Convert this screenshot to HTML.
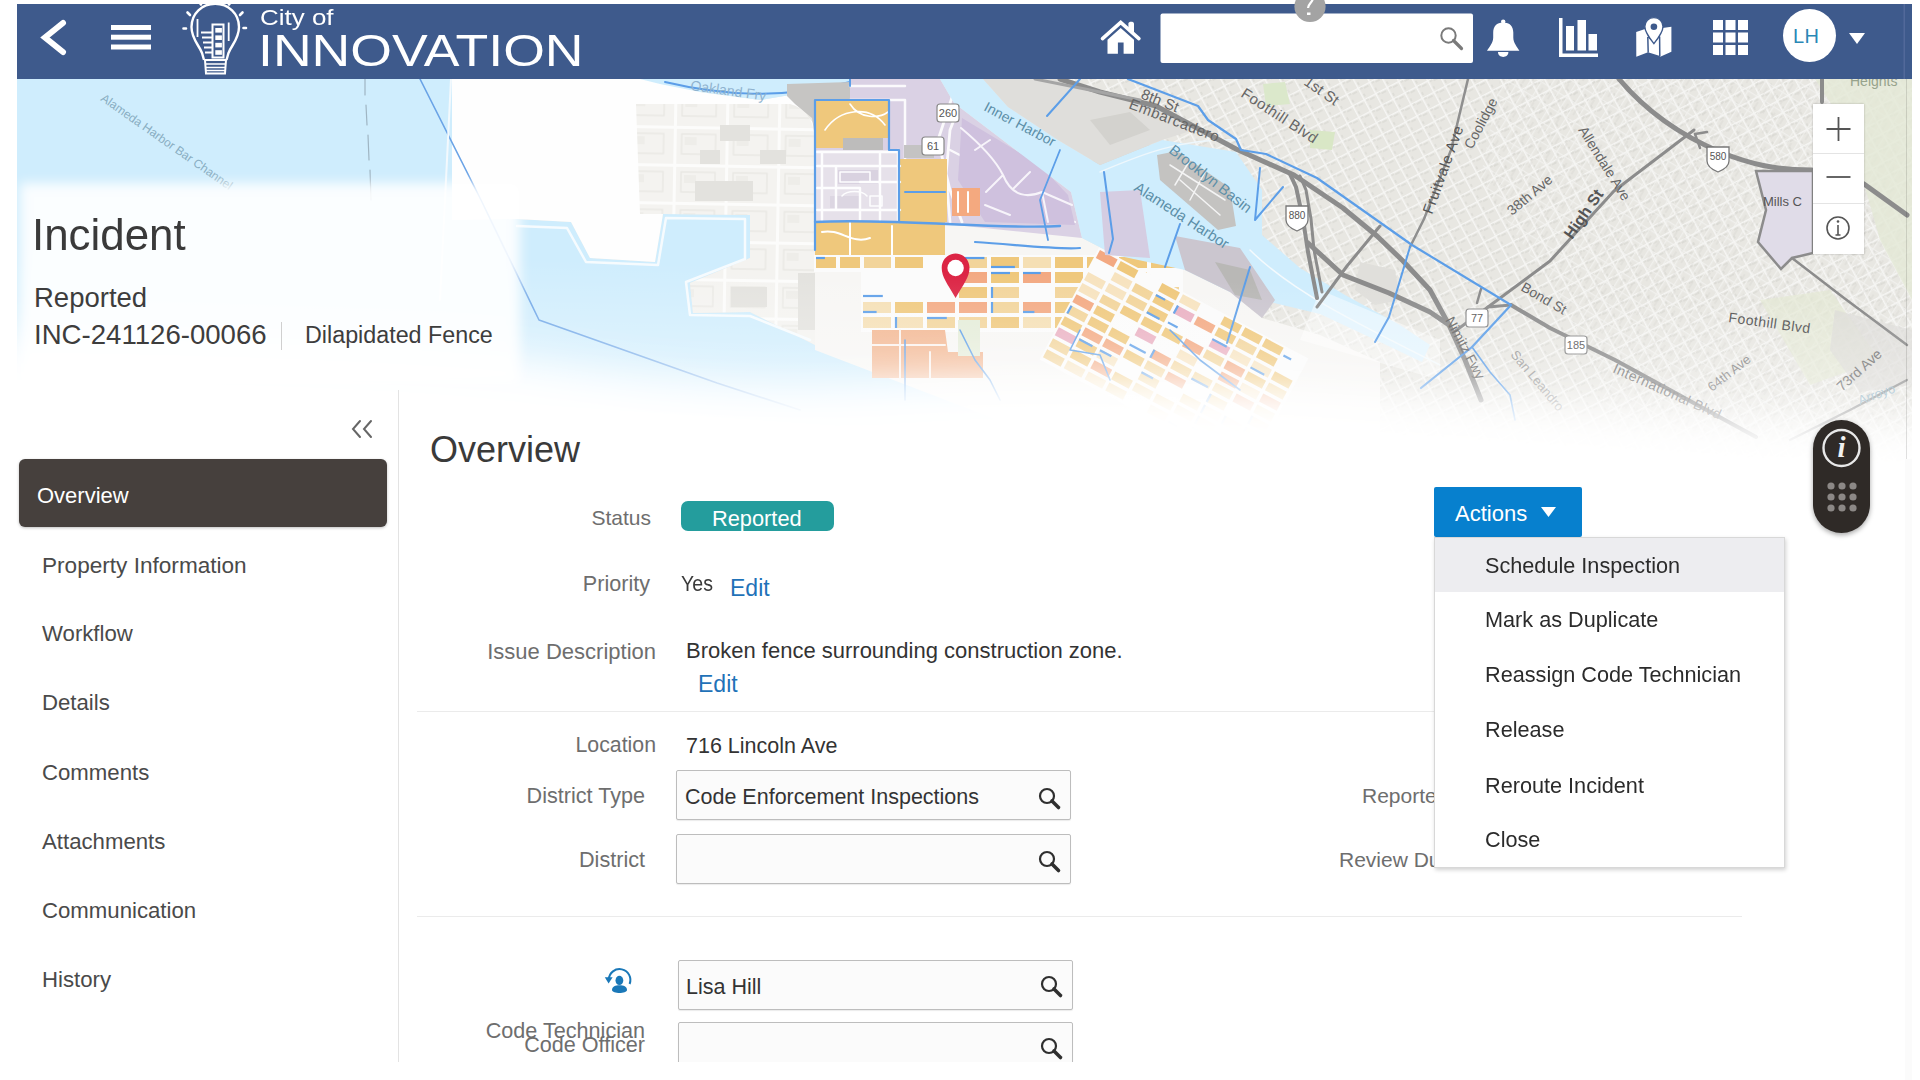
<!DOCTYPE html>
<html><head><meta charset="utf-8">
<style>
*{box-sizing:border-box;margin:0;padding:0}
html,body{width:1920px;height:1080px;overflow:hidden;background:#fff}
body{position:relative;font-family:"Liberation Sans",sans-serif;color:#333}
.abs{position:absolute}
#map{position:absolute;left:17px;top:79px;width:1895px;height:400px;overflow:hidden}
#fade{position:absolute;left:17px;top:300px;width:1890px;height:180px;background:linear-gradient(to bottom,rgba(255,255,255,0) 0%,rgba(255,255,255,.55) 40%,#fff 80%)}
#hdr{position:absolute;left:17px;top:4px;width:1895px;height:75px;background:#3e5a8c}
.t{position:absolute;white-space:nowrap;line-height:1}
.lbl{color:#6e6e6e;font-size:21px}
.val{color:#333;font-size:21.5px}
.edit{color:#1f72b8;font-size:22px}
.nav{position:absolute;left:42px;font-size:22px;color:#4a4a4a;white-space:nowrap;line-height:1}
.inp{position:absolute;border:1px solid #bdbdbd;border-radius:2px;background:#fbfbfb;box-shadow:0 1px 1px rgba(0,0,0,.08)}
.mi{position:absolute;left:1485px;font-size:22.8px;color:#2b2b2b;white-space:nowrap;line-height:1;transform:scaleX(0.95);transform-origin:0 0;margin-top:-1px}
</style></head>
<body>

<div id="map"><svg style="position:absolute;left:-17px;top:-79px" width="1920" height="480" viewBox="0 0 1920 480" font-family="Liberation Sans, sans-serif"><rect x="0.0" y="0.0" width="1920.0" height="480.0" fill="#eae9e4" />
<defs>
<pattern id="st1" width="13" height="13" patternUnits="userSpaceOnUse" patternTransform="rotate(-28)">
 <rect width="13" height="13" fill="#e8e7e2"/>
 <path d="M0,0.5 H13 M0.5,0 V13" stroke="#f6f6f4" stroke-width="2"/>
 <path d="M6,3 H11 M3,8 V11 M2,2 H5" stroke="#d2d1cc" stroke-width="0.9"/>
</pattern>
<pattern id="st2" width="10" height="17" patternUnits="userSpaceOnUse" patternTransform="rotate(32)">
 <path d="M0,0.5 H10 M0.5,0 V17" stroke="#f4f4f2" stroke-width="1.6"/>
 <path d="M5,5 V12" stroke="#d3d2cd" stroke-width="0.8"/>
</pattern>
<pattern id="ap" width="52" height="38" patternUnits="userSpaceOnUse" patternTransform="rotate(1)">
 <rect width="52" height="38" fill="#f4f3f0"/>
 <path d="M0,1.5 H52 M1.5,0 V38" stroke="#fcfcfb" stroke-width="3"/>
 <rect x="8" y="8" width="34" height="20" fill="none" stroke="#e7e6e2" stroke-width="1.2"/>
 <rect x="11" y="11" width="12" height="8" fill="#eeede9"/>
</pattern>
<pattern id="lav" width="14" height="12" patternUnits="userSpaceOnUse">
 <rect width="14" height="12" fill="#dcd6e4"/>
 <path d="M0,1 H14 M1,0 V12" stroke="#f7f6f9" stroke-width="2"/>
</pattern>
</defs>
<polygon points="1030.0,79.0 1920.0,79.0 1920.0,480.0 1300.0,480.0 1260.0,330.0 1200.0,270.0" fill="url(#st1)" />
<polygon points="1500.0,79.0 1920.0,79.0 1920.0,480.0 1640.0,480.0 1560.0,300.0 1480.0,180.0" fill="url(#st2)" opacity="0.7"/>
<polygon points="1815.0,79.0 1912.0,79.0 1912.0,300.0 1880.0,240.0 1860.0,170.0 1835.0,110.0" fill="#e3e9d6" opacity="0.8"/>
<polygon points="1760.0,300.0 1830.0,290.0 1880.0,360.0 1810.0,385.0" fill="#e4e8d4" opacity="0.7"/>
<polygon points="1263.0,84.0 1285.0,82.0 1290.0,104.0 1266.0,106.0" fill="#dbe8cb" />
<polygon points="1310.0,130.0 1335.0,132.0 1332.0,150.0 1310.0,148.0" fill="#d9e7c6" />
<polygon points="1090.0,150.0 1140.0,140.0 1180.0,160.0 1150.0,200.0 1100.0,190.0" fill="#d5d4d0" />
<polygon points="1360.0,262.0 1395.0,270.0 1400.0,300.0 1375.0,305.0 1355.0,290.0" fill="#e0dfdb" />
<polygon points="1835.0,310.0 1912.0,330.0 1912.0,385.0 1860.0,392.0 1830.0,350.0" fill="#dddcd8" opacity="0.7"/>
<polygon points="0.0,79.0 452.0,79.0 452.0,220.0 517.0,219.0 571.0,222.0 590.0,258.0 655.0,262.0 663.0,214.0 750.0,215.0 750.0,258.0 690.0,283.0 693.0,313.0 750.0,312.0 815.0,345.0 1300.0,380.0 1300.0,480.0 0.0,480.0" fill="#cfedfd" />
<polygon points="452.0,79.0 660.0,79.0 700.0,92.0 760.0,100.0 790.0,95.0 815.0,125.0 815.0,200.0 663.0,214.0 655.0,262.0 590.0,258.0 571.0,222.0 517.0,219.0 452.0,220.0" fill="#fefefe" />
<path d="M636,104 L790,104 C805,108 812,118 815,135 L815,345 L750,312 L693,313 L690,283 L750,258 L750,215 L663,214 L640,214 Z" fill="url(#ap)"/>
<rect x="695.0" y="181.0" width="58.0" height="20.0" fill="#e3e2de" />
<rect x="731.0" y="287.0" width="36.0" height="20.0" fill="#e3e2de" />
<rect x="798.0" y="273.0" width="18.0" height="57.0" fill="#e3e2de" />
<rect x="720.0" y="125.0" width="30.0" height="16.0" fill="#e3e2de" />
<rect x="760.0" y="150.0" width="26.0" height="14.0" fill="#e3e2de" />
<rect x="700.0" y="150.0" width="20.0" height="14.0" fill="#e3e2de" />
<polyline points="517.0,226.0 567.0,228.0 586.0,262.0 658.0,265.0 666.0,218.0 745.0,219.0 745.0,259.0 686.0,282.0 690.0,315.0 750.0,316.0 810.0,340.0" fill="none" stroke="#f6fbfe" stroke-width="2.5" stroke-linejoin="round" stroke-linecap="round" />
<polygon points="640.0,79.0 955.0,79.0 900.0,86.0 850.0,84.0 790.0,95.0 760.0,100.0 700.0,92.0 660.0,84.0" fill="#cfedfd" />
<path d="M665,82 C720,95 780,100 850,82 L900,79" fill="none" stroke="#5c9ee8" stroke-width="2" stroke-linejoin="round" stroke-linecap="round" />
<polygon points="787.0,84.0 850.0,82.0 850.0,133.0 815.0,138.0 812.0,118.0 795.0,104.0 787.0,96.0" fill="#c6c5c3" />
<polygon points="850.0,79.0 940.0,79.0 954.0,103.0 1071.0,192.0 1082.0,238.0 1060.0,245.0 960.0,228.0 880.0,228.0 815.0,250.0 815.0,140.0 850.0,133.0" fill="#dad1e4" />
<path d="M905,100 L905,160 M850,100 L905,100 M850,86 L905,86" fill="none" stroke="#fbfafc" stroke-width="2.5" stroke-linejoin="round" stroke-linecap="round" />
<path d="M958,79 L938,140 L950,190 L962,222 M970,79 L950,130 L946,175 L950,222" fill="none" stroke="#fbfafc" stroke-width="2.8" stroke-linejoin="round" stroke-linecap="round" />
<path d="M950,150 C990,170 1020,190 1040,215 M1000,185 L1025,170 M1040,215 L1075,222" fill="none" stroke="#fbfafc" stroke-width="2.2" stroke-linejoin="round" stroke-linecap="round" />
<rect x="904.0" y="145.0" width="30.0" height="13.0" fill="#c4c3c3" />
<polygon points="962.0,118.0 1040.0,165.0 1068.0,195.0 1075.0,225.0 985.0,222.0 958.0,180.0" fill="#cfc1de" />
<path d="M961,128 C985,148 998,165 1003,175 C1010,192 1022,200 1042,192 L1072,205 M1003,175 L986,192 M1014,188 L1030,172 M975,150 L990,140 M1042,192 L1048,222 M985,205 L1010,215" fill="none" stroke="#f7f4fa" stroke-width="2" stroke-linejoin="round" stroke-linecap="round" />
<rect x="843.0" y="136.0" width="40.0" height="16.0" fill="#bdbcbb" />
<polygon points="815.0,101.0 889.0,101.0 889.0,138.0 843.0,138.0 843.0,148.0 815.0,148.0" fill="#efc87c" />
<polygon points="899.0,159.0 947.0,159.0 947.0,222.0 899.0,222.0" fill="#efc87c" />
<path d="M905,192 L945,192" fill="none" stroke="#5c9ee8" stroke-width="2" stroke-linejoin="round" stroke-linecap="round" />
<rect x="952.0" y="188.0" width="28.0" height="28.0" fill="#f4a97f" />
<path d="M958,192 V212 M968,192 V212" fill="none" stroke="#fff" stroke-width="2" stroke-linejoin="round" stroke-linecap="round" />
<polygon points="815.0,222.0 945.0,222.0 945.0,256.0 815.0,256.0" fill="#efc87c" />
<path d="M822,232 C840,228 852,245 870,238 M892,226 V256 M850,222 V256" fill="none" stroke="#fff" stroke-width="2" stroke-linejoin="round" stroke-linecap="round" />
<rect x="815.0" y="150.0" width="85.0" height="72.0" fill="#e6e1ea" />
<rect x="838.0" y="170.0" width="40.0" height="14.0" fill="#d9d2e0" />
<rect x="830.0" y="196.0" width="30.0" height="12.0" fill="#dcd6e2" />
<path d="M817,152 H898 M817,166 H900 M817,188 H860 M860,182 H900 M817,210 H900 M822,152 V220 M836,166 V210 M880,152 V220 M898,150 V222 M860,188 V220" fill="none" stroke="#fdfdfe" stroke-width="2.4" stroke-linejoin="round" stroke-linecap="round" />
<path d="M840,172 h30 v10 h-30 z M842,196 c5,-6 20,-6 25,0 M870,196 h12 v10 h-12 z" fill="none" stroke="#fdfdfe" stroke-width="1.6" stroke-linejoin="round" stroke-linecap="round" />
<path d="M825,130 C840,108 870,105 885,125 M850,104 C860,120 880,118 888,112" fill="none" stroke="#fff" stroke-width="1.6" stroke-linejoin="round" stroke-linecap="round" />
<polygon points="815.0,256.0 945.0,256.0 945.0,224.0 1082.0,238.0 1115.0,255.0 1185.0,270.0 1230.0,292.0 1262.0,318.0 1320.0,335.0 1380.0,362.0 1380.0,480.0 1050.0,440.0 815.0,350.0" fill="#f7f6f4" />
<g transform="rotate(0 863 257)"><rect x="861" y="255" width="322" height="77" fill="#fbfbfb"/><rect x="863.0" y="257.0" width="28" height="11" fill="#f2d49a"/><path d="M863.0,296.0 h19.8" stroke="#5c9ee8" stroke-width="2.2"/><rect x="863.0" y="302.0" width="28" height="11" fill="#f5dfb4"/><path d="M863.0,312.0 h13.6" stroke="#5c9ee8" stroke-width="2.2"/><rect x="863.0" y="317.0" width="28" height="11" fill="#f5dfb4"/><rect x="895.0" y="257.0" width="28" height="11" fill="#efc87c"/><rect x="895.0" y="302.0" width="28" height="11" fill="#efc87c"/><rect x="895.0" y="317.0" width="28" height="11" fill="#f5dfb4"/><path d="M896.0,317.0 v11.0" stroke="#5c9ee8" stroke-width="2.2"/><rect x="927.0" y="302.0" width="28" height="11" fill="#f3a982"/><rect x="927.0" y="317.0" width="28" height="11" fill="#f2d49a"/><path d="M927.0,318.0 h19.8" stroke="#5c9ee8" stroke-width="2.2"/><rect x="959.0" y="257.0" width="28" height="11" fill="#f2d49a"/><path d="M959.0,258.0 h25.4" stroke="#5c9ee8" stroke-width="2.2"/><rect x="959.0" y="272.0" width="28" height="11" fill="#f3a982"/><rect x="959.0" y="287.0" width="28" height="11" fill="#efc87c"/><rect x="959.0" y="302.0" width="28" height="11" fill="#f3a982"/><rect x="959.0" y="317.0" width="28" height="11" fill="#f2d49a"/><rect x="991.0" y="257.0" width="28" height="11" fill="#efc87c"/><path d="M991.0,267.0 h23.9" stroke="#5c9ee8" stroke-width="2.2"/><rect x="991.0" y="272.0" width="28" height="11" fill="#efc87c"/><path d="M991.0,273.0 h19.0" stroke="#5c9ee8" stroke-width="2.2"/><rect x="991.0" y="287.0" width="28" height="11" fill="#f2d49a"/><path d="M992.0,287.0 v11.0" stroke="#5c9ee8" stroke-width="2.2"/><rect x="991.0" y="302.0" width="28" height="11" fill="#f2d49a"/><path d="M992.0,302.0 v11.0" stroke="#5c9ee8" stroke-width="2.2"/><rect x="991.0" y="317.0" width="28" height="11" fill="#efc87c"/><rect x="1023.0" y="257.0" width="28" height="11" fill="#f5dfb4"/><rect x="1023.0" y="272.0" width="28" height="11" fill="#f3a982"/><path d="M1023.0,273.0 h17.8" stroke="#5c9ee8" stroke-width="2.2"/><rect x="1023.0" y="302.0" width="28" height="11" fill="#f3a982"/><path d="M1023.0,312.0 h11.4" stroke="#5c9ee8" stroke-width="2.2"/><rect x="1023.0" y="317.0" width="28" height="11" fill="#f5dfb4"/><rect x="1055.0" y="257.0" width="28" height="11" fill="#efc87c"/><rect x="1055.0" y="272.0" width="28" height="11" fill="#efc87c"/><rect x="1055.0" y="287.0" width="28" height="11" fill="#f2d49a"/><rect x="1055.0" y="302.0" width="28" height="11" fill="#efc87c"/><rect x="1055.0" y="317.0" width="28" height="11" fill="#efc87c"/><rect x="1087.0" y="257.0" width="28" height="11" fill="#efc87c"/><rect x="1087.0" y="272.0" width="28" height="11" fill="#f2d49a"/><rect x="1087.0" y="287.0" width="28" height="11" fill="#efc87c"/><path d="M1087.0,288.0 h11.9" stroke="#5c9ee8" stroke-width="2.2"/><path d="M1087.0,311.0 h23.0" stroke="#5c9ee8" stroke-width="2.2"/><rect x="1087.0" y="317.0" width="28" height="11" fill="#f5dfb4"/><rect x="1119.0" y="257.0" width="28" height="11" fill="#efc87c"/><rect x="1119.0" y="272.0" width="28" height="11" fill="#efc87c"/><rect x="1119.0" y="302.0" width="28" height="11" fill="#f3a982"/><path d="M1119.0,303.0 h12.4" stroke="#5c9ee8" stroke-width="2.2"/><rect x="1119.0" y="317.0" width="28" height="11" fill="#efc87c"/><path d="M1119.0,327.0 h17.4" stroke="#5c9ee8" stroke-width="2.2"/><rect x="1151.0" y="257.0" width="28" height="11" fill="#efc87c"/><rect x="1151.0" y="287.0" width="28" height="11" fill="#f2d49a"/><rect x="1151.0" y="302.0" width="28" height="11" fill="#efc87c"/><path d="M1151.0,312.0 h23.0" stroke="#5c9ee8" stroke-width="2.2"/><path d="M1151.0,326.0 h21.9" stroke="#5c9ee8" stroke-width="2.2"/></g>
<g transform="rotate(0 816 257)"><rect x="814" y="255" width="50" height="17" fill="#fbfbfb"/><rect x="816.0" y="257.0" width="20" height="11" fill="#efc87c"/><path d="M816.0,258.0 h8.9" stroke="#5c9ee8" stroke-width="2.2"/><rect x="840.0" y="257.0" width="20" height="11" fill="#efc87c"/></g>
<polygon points="872.0,330.0 945.0,330.0 948.0,352.0 983.0,352.0 983.0,378.0 872.0,378.0" fill="#f2b58f" />
<path d="M872,345 H945 M900,330 V378 M930,352 V378" fill="none" stroke="#fbf3ee" stroke-width="2" stroke-linejoin="round" stroke-linecap="round" />
<polygon points="958.0,320.0 980.0,320.0 980.0,356.0 958.0,356.0" fill="#e4ecd8" />
<g transform="rotate(28 1100 250)"><rect x="1098" y="248" width="237.0" height="127.0" fill="#fbfbfb"/><rect x="1100.0" y="250.0" width="20" height="9" fill="#f3a982"/><rect x="1100.0" y="275.0" width="20" height="9" fill="#f7e3bf"/><rect x="1100.0" y="287.5" width="20" height="9" fill="#f7e3bf"/><rect x="1100.0" y="300.0" width="20" height="9" fill="#f3a982"/><rect x="1100.0" y="312.5" width="20" height="9" fill="#f2d49a"/><path d="M1101.0,312.5 v9.0" stroke="#5c9ee8" stroke-width="2.2"/><rect x="1100.0" y="325.0" width="20" height="9" fill="#efc87c"/><rect x="1100.0" y="337.5" width="20" height="9" fill="#eab0c2"/><rect x="1100.0" y="350.0" width="20" height="9" fill="#f2d49a"/><rect x="1100.0" y="362.5" width="20" height="9" fill="#f2d49a"/><rect x="1123.5" y="250.0" width="20" height="9" fill="#efc87c"/><rect x="1123.5" y="262.5" width="20" height="9" fill="#f7e3bf"/><rect x="1123.5" y="275.0" width="20" height="9" fill="#f7e3bf"/><rect x="1123.5" y="287.5" width="20" height="9" fill="#f2d49a"/><rect x="1123.5" y="300.0" width="20" height="9" fill="#efc87c"/><rect x="1123.5" y="312.5" width="20" height="9" fill="#efc87c"/><rect x="1123.5" y="325.0" width="20" height="9" fill="#f3a982"/><rect x="1123.5" y="337.5" width="20" height="9" fill="#efc87c"/><path d="M1123.5,338.5 h15.0" stroke="#5c9ee8" stroke-width="2.2"/><rect x="1123.5" y="350.0" width="20" height="9" fill="#efc87c"/><rect x="1123.5" y="362.5" width="20" height="9" fill="#f7e3bf"/><rect x="1147.0" y="262.5" width="20" height="9" fill="#f2d49a"/><rect x="1147.0" y="275.0" width="20" height="9" fill="#f2d49a"/><rect x="1147.0" y="287.5" width="20" height="9" fill="#efc87c"/><rect x="1147.0" y="312.5" width="20" height="9" fill="#efc87c"/><rect x="1147.0" y="325.0" width="20" height="9" fill="#f3a982"/><rect x="1147.0" y="337.5" width="20" height="9" fill="#f7e3bf"/><path d="M1147.0,338.5 h12.9" stroke="#5c9ee8" stroke-width="2.2"/><rect x="1147.0" y="350.0" width="20" height="9" fill="#f3a982"/><rect x="1147.0" y="362.5" width="20" height="9" fill="#f7e3bf"/><rect x="1170.5" y="250.0" width="20" height="9" fill="#efc87c"/><rect x="1170.5" y="262.5" width="20" height="9" fill="#efc87c"/><path d="M1170.5,263.5 h10.4" stroke="#5c9ee8" stroke-width="2.2"/><rect x="1170.5" y="275.0" width="20" height="9" fill="#efc87c"/><path d="M1170.5,283.0 h14.4" stroke="#5c9ee8" stroke-width="2.2"/><rect x="1170.5" y="287.5" width="20" height="9" fill="#efc87c"/><rect x="1170.5" y="300.0" width="20" height="9" fill="#eab0c2"/><path d="M1170.5,319.5 h18.2" stroke="#5c9ee8" stroke-width="2.2"/><rect x="1170.5" y="325.0" width="20" height="9" fill="#efc87c"/><rect x="1170.5" y="350.0" width="20" height="9" fill="#efc87c"/><rect x="1170.5" y="362.5" width="20" height="9" fill="#f2d49a"/><rect x="1194.0" y="250.0" width="20" height="9" fill="#f7e3bf"/><rect x="1194.0" y="262.5" width="20" height="9" fill="#eab0c2"/><path d="M1195.0,262.5 v9.0" stroke="#5c9ee8" stroke-width="2.2"/><path d="M1194.0,282.0 h10.9" stroke="#5c9ee8" stroke-width="2.2"/><rect x="1194.0" y="287.5" width="20" height="9" fill="#efc87c"/><rect x="1194.0" y="312.5" width="20" height="9" fill="#f3a982"/><path d="M1195.0,312.5 v9.0" stroke="#5c9ee8" stroke-width="2.2"/><rect x="1194.0" y="325.0" width="20" height="9" fill="#f2d49a"/><rect x="1194.0" y="337.5" width="20" height="9" fill="#f2d49a"/><path d="M1194.0,338.5 h13.1" stroke="#5c9ee8" stroke-width="2.2"/><rect x="1194.0" y="350.0" width="20" height="9" fill="#f2d49a"/><rect x="1217.5" y="262.5" width="20" height="9" fill="#f3a982"/><rect x="1217.5" y="287.5" width="20" height="9" fill="#f3a982"/><rect x="1217.5" y="300.0" width="20" height="9" fill="#f7e3bf"/><rect x="1217.5" y="312.5" width="20" height="9" fill="#f2d49a"/><rect x="1217.5" y="325.0" width="20" height="9" fill="#f3a982"/><rect x="1217.5" y="350.0" width="20" height="9" fill="#efc87c"/><rect x="1217.5" y="362.5" width="20" height="9" fill="#f2d49a"/><rect x="1241.0" y="250.0" width="20" height="9" fill="#efc87c"/><rect x="1241.0" y="262.5" width="20" height="9" fill="#efc87c"/><rect x="1241.0" y="275.0" width="20" height="9" fill="#eab0c2"/><path d="M1241.0,276.0 h16.3" stroke="#5c9ee8" stroke-width="2.2"/><rect x="1241.0" y="287.5" width="20" height="9" fill="#f2d49a"/><rect x="1241.0" y="312.5" width="20" height="9" fill="#f2d49a"/><path d="M1241.0,320.5 h18.8" stroke="#5c9ee8" stroke-width="2.2"/><rect x="1241.0" y="337.5" width="20" height="9" fill="#efc87c"/><rect x="1241.0" y="350.0" width="20" height="9" fill="#efc87c"/><path d="M1241.0,369.5 h9.9" stroke="#5c9ee8" stroke-width="2.2"/><rect x="1264.5" y="250.0" width="20" height="9" fill="#efc87c"/><rect x="1264.5" y="262.5" width="20" height="9" fill="#f2d49a"/><rect x="1264.5" y="275.0" width="20" height="9" fill="#f7e3bf"/><rect x="1264.5" y="287.5" width="20" height="9" fill="#f3a982"/><rect x="1264.5" y="300.0" width="20" height="9" fill="#f3a982"/><rect x="1264.5" y="312.5" width="20" height="9" fill="#f2d49a"/><rect x="1264.5" y="325.0" width="20" height="9" fill="#efc87c"/><path d="M1265.5,325.0 v9.0" stroke="#5c9ee8" stroke-width="2.2"/><rect x="1264.5" y="337.5" width="20" height="9" fill="#f7e3bf"/><path d="M1265.5,337.5 v9.0" stroke="#5c9ee8" stroke-width="2.2"/><rect x="1264.5" y="350.0" width="20" height="9" fill="#efc87c"/><path d="M1265.5,350.0 v9.0" stroke="#5c9ee8" stroke-width="2.2"/><rect x="1264.5" y="362.5" width="20" height="9" fill="#f7e3bf"/><path d="M1264.5,363.5 h18.7" stroke="#5c9ee8" stroke-width="2.2"/><rect x="1288.0" y="250.0" width="20" height="9" fill="#efc87c"/><rect x="1288.0" y="262.5" width="20" height="9" fill="#efc87c"/><rect x="1288.0" y="275.0" width="20" height="9" fill="#f7e3bf"/><path d="M1288.0,283.0 h15.5" stroke="#5c9ee8" stroke-width="2.2"/><rect x="1288.0" y="287.5" width="20" height="9" fill="#efc87c"/><rect x="1288.0" y="300.0" width="20" height="9" fill="#f7e3bf"/><rect x="1288.0" y="312.5" width="20" height="9" fill="#f3a982"/><rect x="1288.0" y="337.5" width="20" height="9" fill="#f2d49a"/><path d="M1289.0,337.5 v9.0" stroke="#5c9ee8" stroke-width="2.2"/><rect x="1288.0" y="350.0" width="20" height="9" fill="#f7e3bf"/><rect x="1288.0" y="362.5" width="20" height="9" fill="#efc87c"/><path d="M1288.0,363.5 h19.9" stroke="#5c9ee8" stroke-width="2.2"/><path d="M1311.5,257.0 h8.7" stroke="#5c9ee8" stroke-width="2.2"/><rect x="1311.5" y="275.0" width="20" height="9" fill="#efc87c"/><rect x="1311.5" y="287.5" width="20" height="9" fill="#f2d49a"/><rect x="1311.5" y="300.0" width="20" height="9" fill="#f3a982"/><rect x="1311.5" y="312.5" width="20" height="9" fill="#f2d49a"/><rect x="1311.5" y="325.0" width="20" height="9" fill="#efc87c"/><path d="M1312.5,325.0 v9.0" stroke="#5c9ee8" stroke-width="2.2"/><rect x="1311.5" y="337.5" width="20" height="9" fill="#efc87c"/><path d="M1312.5,337.5 v9.0" stroke="#5c9ee8" stroke-width="2.2"/></g>
<path d="M815,222 C900,218 1000,230 1060,226" fill="none" stroke="#5c9ee8" stroke-width="2.4" stroke-linejoin="round" stroke-linecap="round" />
<path d="M975,242 C1020,245 1060,250 1080,248" fill="none" stroke="#5c9ee8" stroke-width="2.2" stroke-linejoin="round" stroke-linecap="round" />
<path d="M815,250 L815,100 L889,100 L889,150 L899,150 L899,222" fill="none" stroke="#5c9ee8" stroke-width="2.2" stroke-linejoin="round" stroke-linecap="round" />
<path d="M850,79 L850,86" fill="none" stroke="#5c9ee8" stroke-width="2" stroke-linejoin="round" stroke-linecap="round" />
<polyline points="905.0,340.0 905.0,400.0" fill="none" stroke="#5c9ee8" stroke-width="1.6" stroke-linejoin="round" stroke-linecap="round" />
<polyline points="960.0,330.0 975.0,360.0 990.0,380.0 1000.0,400.0" fill="none" stroke="#5c9ee8" stroke-width="1.6" stroke-linejoin="round" stroke-linecap="round" />
<polyline points="1080.0,330.0 1070.0,350.0 1100.0,355.0 1110.0,380.0" fill="none" stroke="#5c9ee8" stroke-width="1.6" stroke-linejoin="round" stroke-linecap="round" />
<polyline points="1170.0,330.0 1200.0,360.0 1240.0,390.0" fill="none" stroke="#5c9ee8" stroke-width="1.6" stroke-linejoin="round" stroke-linecap="round" />
<polygon points="940.0,79.0 983.0,79.0 1008.0,107.0 1058.0,140.0 1100.0,165.0 1162.0,140.0 1236.0,152.0 1262.0,190.0 1262.0,228.0 1262.0,235.0 1300.0,268.0 1345.0,295.0 1400.0,325.0 1430.0,345.0 1422.0,362.0 1380.0,342.0 1320.0,314.0 1262.0,300.0 1230.0,292.0 1185.0,270.0 1115.0,255.0 1082.0,238.0 1071.0,192.0 954.0,103.0" fill="#cfedfd" />
<polygon points="1320.0,290.0 1440.0,340.0 1440.0,380.0 1300.0,340.0" fill="#ffffff" opacity="0.45"/>
<polygon points="983.0,79.0 1060.0,79.0 1156.0,106.0 1200.0,128.0 1162.0,140.0 1100.0,165.0 1058.0,140.0 1008.0,107.0" fill="#dfdedb" />
<polygon points="1090.0,120.0 1130.0,112.0 1150.0,130.0 1110.0,145.0" fill="#d3d2ce" />
<polygon points="1157.0,155.0 1177.0,151.0 1230.0,188.0 1236.0,226.0 1218.0,230.0 1160.0,180.0" fill="#c4c3c1" />
<path d="M1170,165 L1225,200 M1180,180 L1220,215 M1190,160 L1175,185 M1205,172 L1190,200" fill="none" stroke="#f4f4f4" stroke-width="1.5" stroke-linejoin="round" stroke-linecap="round" />
<path d="M1100,172 C1140,155 1180,138 1240,140" fill="none" stroke="#eef7fc" stroke-width="1.5" stroke-linejoin="round" stroke-linecap="round" />
<path d="M1250,250 C1290,290 1350,320 1440,365" fill="none" stroke="#f4fafd" stroke-width="1.5" stroke-linejoin="round" stroke-linecap="round" />
<polygon points="1100.0,192.0 1140.0,190.0 1150.0,258.0 1105.0,255.0" fill="#d5cde2" />
<polygon points="1175.0,236.0 1240.0,248.0 1275.0,300.0 1262.0,318.0 1230.0,292.0 1185.0,270.0" fill="#cbc6cf" />
<polygon points="1215.0,262.0 1250.0,270.0 1262.0,300.0 1235.0,295.0" fill="#b9b8b6" />
<polyline points="1060.0,79.0 1100.0,92.0 1156.0,106.0 1236.0,149.0 1294.0,175.0 1343.0,208.0 1377.0,236.0 1403.0,261.0 1430.0,290.0 1449.0,325.0 1465.0,360.0 1481.0,400.0" fill="none" stroke="#8c8c8c" stroke-width="5" stroke-linejoin="round" stroke-linecap="round" />
<polyline points="1290.0,174.0 1296.0,187.0 1303.0,219.0 1308.0,252.0 1317.0,298.0" fill="none" stroke="#8c8c8c" stroke-width="4" stroke-linejoin="round" stroke-linecap="round" />
<polyline points="1300.0,176.0 1306.0,190.0 1311.0,219.0 1314.0,250.0 1322.0,292.0" fill="none" stroke="#8c8c8c" stroke-width="3" stroke-linejoin="round" stroke-linecap="round" />
<polyline points="1308.0,243.0 1343.0,275.0 1389.0,293.0 1430.0,312.0 1449.0,325.0" fill="none" stroke="#8c8c8c" stroke-width="5" stroke-linejoin="round" stroke-linecap="round" />
<polyline points="1317.0,307.0 1347.0,266.0 1380.0,226.0" fill="none" stroke="#8c8c8c" stroke-width="3" stroke-linejoin="round" stroke-linecap="round" />
<polyline points="1511.0,305.0 1550.0,328.0 1615.0,360.0 1756.0,437.0" fill="none" stroke="#8c8c8c" stroke-width="4" stroke-linejoin="round" stroke-linecap="round" />
<polyline points="1454.0,332.0 1488.0,307.0 1550.0,261.0 1614.0,191.0 1694.0,130.0" fill="none" stroke="#8c8c8c" stroke-width="3" stroke-linejoin="round" stroke-linecap="round" />
<polyline points="1481.0,289.0 1477.0,303.0" fill="none" stroke="#8c8c8c" stroke-width="2.5" stroke-linejoin="round" stroke-linecap="round" />
<polyline points="1488.0,307.0 1511.0,305.0" fill="none" stroke="#8c8c8c" stroke-width="3" stroke-linejoin="round" stroke-linecap="round" />
<path d="M1619,79 C1645,110 1680,135 1720,152 C1750,164 1775,170 1812,170" fill="none" stroke="#8c8c8c" stroke-width="5" stroke-linejoin="round" stroke-linecap="round" />
<path d="M1700,148 L1695,134 L1707,132" fill="none" stroke="#8c8c8c" stroke-width="2.5" stroke-linejoin="round" stroke-linecap="round" />
<polyline points="1864.0,184.0 1907.0,215.0" fill="none" stroke="#8c8c8c" stroke-width="5" stroke-linejoin="round" stroke-linecap="round" />
<polyline points="1822.0,79.0 1822.0,102.0" fill="none" stroke="#8c8c8c" stroke-width="4" stroke-linejoin="round" stroke-linecap="round" />
<polyline points="1468.0,79.0 1451.0,150.0 1424.0,219.0 1410.0,247.0" fill="none" stroke="#8f8f8f" stroke-width="2.5" stroke-linejoin="round" stroke-linecap="round" />
<polyline points="1035.0,79.0 1090.0,90.0 1140.0,100.0" fill="none" stroke="#a5a5a5" stroke-width="3" stroke-linejoin="round" stroke-linecap="round" />
<polygon points="1756.0,171.0 1813.0,171.0 1813.0,253.0 1792.0,258.0 1781.0,269.0 1758.0,242.0 1766.0,210.0" fill="#e0dce8" stroke="#8c8c8c" stroke-width="2.5"/>
<polyline points="1792.0,258.0 1844.0,298.0 1907.0,345.0" fill="none" stroke="#8c8c8c" stroke-width="2.5" stroke-linejoin="round" stroke-linecap="round" />
<polyline points="1907.0,380.0 1850.0,410.0 1790.0,440.0" fill="none" stroke="#9a9a9a" stroke-width="2.2" stroke-linejoin="round" stroke-linecap="round" />
<polyline points="1128.0,79.0 1198.0,106.0 1208.0,120.0 1236.0,139.0 1241.0,150.0 1266.0,154.0 1317.0,178.0 1412.0,245.0 1511.0,305.0 1472.0,347.0 1421.0,388.0" fill="none" stroke="#5c9ee8" stroke-width="2.2" stroke-linejoin="round" stroke-linecap="round" />
<polyline points="1410.0,247.0 1389.0,317.0 1375.0,342.0" fill="none" stroke="#5c9ee8" stroke-width="2" stroke-linejoin="round" stroke-linecap="round" />
<polyline points="1260.0,168.0 1255.0,220.0 1283.0,187.0" fill="none" stroke="#5c9ee8" stroke-width="2" stroke-linejoin="round" stroke-linecap="round" />
<polyline points="1080.0,79.0 1047.0,116.0" fill="none" stroke="#5c9ee8" stroke-width="2" stroke-linejoin="round" stroke-linecap="round" />
<polyline points="1104.0,172.0 1113.0,239.0 1109.0,253.0" fill="none" stroke="#5c9ee8" stroke-width="2" stroke-linejoin="round" stroke-linecap="round" />
<polyline points="1180.0,224.0 1165.0,267.0" fill="none" stroke="#5c9ee8" stroke-width="2" stroke-linejoin="round" stroke-linecap="round" />
<polyline points="1250.0,267.0 1227.0,343.0" fill="none" stroke="#5c9ee8" stroke-width="2" stroke-linejoin="round" stroke-linecap="round" />
<polyline points="1060.0,150.0 1040.0,200.0 1048.0,240.0" fill="none" stroke="#5c9ee8" stroke-width="1.8" stroke-linejoin="round" stroke-linecap="round" />
<polyline points="1472.0,347.0 1490.0,372.0 1510.0,395.0 1515.0,420.0" fill="none" stroke="#5c9ee8" stroke-width="1.6" stroke-linejoin="round" stroke-linecap="round" />
<polyline points="420.0,79.0 481.0,200.0 539.0,320.0 717.0,383.0 800.0,410.0" fill="none" stroke="#6aa3e6" stroke-width="1.6" stroke-linejoin="round" stroke-linecap="round" />
<polyline points="451.0,79.0 445.0,200.0 440.0,300.0" fill="none" stroke="#f3f9fd" stroke-width="2" stroke-linejoin="round" stroke-linecap="round" />
<path d="M365,79 L365,95 M366,105 L367,125 M368,135 L369,160 M370,170 L371,200" fill="none" stroke="#9fb5c3" stroke-width="1.2" stroke-linejoin="round" stroke-linecap="round" />
<path d="M955.6,298 C947.5,284 941.7,277 941.7,267.8 C941.7,259.5 948,253.6 955.6,253.6 C963.2,253.6 969.5,259.5 969.5,267.8 C969.5,277 963.7,284 955.6,298 Z" fill="#dc2444"/>
<circle cx="955.6" cy="268" r="8.2" fill="#fff"/>
<text x="1128" y="108" font-size="15" fill="#666" transform="rotate(21 1128 108)" letter-spacing="0.5">Embarcadero</text>
<text x="1240" y="96" font-size="15" fill="#666" transform="rotate(33 1240 96)" letter-spacing="0.5">Foothill Blvd</text>
<text x="1303" y="84" font-size="15" fill="#666" transform="rotate(35 1303 84)" >1st St</text>
<text x="1140" y="98" font-size="15" fill="#666" transform="rotate(22 1140 98)" >8th St</text>
<text x="1168" y="152" font-size="15" fill="#5c8fa8" transform="rotate(38 1168 152)" >Brooklyn Basin</text>
<text x="1133" y="190" font-size="15" fill="#5c8fa8" transform="rotate(33 1133 190)" >Alameda Harbor</text>
<text x="983" y="110" font-size="14" fill="#5c8fa8" transform="rotate(28 983 110)" >Inner Harbor</text>
<text x="1432" y="215" font-size="15" fill="#555" transform="rotate(-70 1432 215)" letter-spacing="0.5">Fruitvale Ave</text>
<text x="1472" y="150" font-size="14" fill="#666" transform="rotate(-62 1472 150)" >Coolidge</text>
<text x="1512" y="216" font-size="14" fill="#666" transform="rotate(-40 1512 216)" >38th Ave</text>
<text x="1578" y="130" font-size="14" fill="#666" transform="rotate(58 1578 130)" >Allendale Ave</text>
<text x="1572" y="240" font-size="16" fill="#555" transform="rotate(-55 1572 240)" font-weight="bold">High St</text>
<text x="1520" y="290" font-size="14" fill="#666" transform="rotate(30 1520 290)" >Bond St</text>
<text x="1728" y="322" font-size="14" fill="#555" transform="rotate(8 1728 322)" letter-spacing="0.5">Foothill Blvd</text>
<text x="1612" y="372" font-size="14" fill="#777" transform="rotate(24 1612 372)" letter-spacing="0.5">International Blvd</text>
<text x="1712" y="392" font-size="13" fill="#888" transform="rotate(-38 1712 392)" >64th Ave</text>
<text x="1842" y="392" font-size="14" fill="#777" transform="rotate(-42 1842 392)" >73rd Ave</text>
<text x="1445" y="320" font-size="14" fill="#666" transform="rotate(62 1445 320)" >Nimitz Fwy</text>
<text x="1510" y="355" font-size="13" fill="#999" transform="rotate(50 1510 355)" >San Leandro</text>
<text x="1763" y="206" font-size="13" fill="#555" transform="rotate(0 1763 206)" >Mills C</text>
<text x="100" y="100" font-size="12" fill="#89aec2" transform="rotate(35 100 100)" >Alameda Harbor Bar Channel</text>
<text x="690" y="90" font-size="14" fill="#8fb3cf" transform="rotate(8 690 90)" >Oakland Fry</text>
<text x="1860" y="405" font-size="13" fill="#9cbccc" transform="rotate(-20 1860 405)" >Arroyo</text>
<text x="1850" y="86" font-size="14" fill="#97a38c" transform="rotate(0 1850 86)" >Heights</text>
<g><path d="M1286,206 h22 v14 c0,6 -6,9 -11,11 c-5,-2 -11,-5 -11,-11 Z" fill="#fff" stroke="#777" stroke-width="1.3"/><text x="1297" y="219" font-size="10" text-anchor="middle" fill="#555">880</text></g>
<g><path d="M1707,147 h22 v14 c0,6 -6,9 -11,11 c-5,-2 -11,-5 -11,-11 Z" fill="#fff" stroke="#777" stroke-width="1.3"/><text x="1718" y="160" font-size="10" text-anchor="middle" fill="#555">580</text></g>
<g><rect x="1466" y="309" width="22" height="18" rx="3" fill="#fff" stroke="#888" stroke-width="1.2"/><text x="1477" y="322" font-size="11" text-anchor="middle" fill="#555">77</text></g>
<g><rect x="1565" y="336" width="22" height="18" rx="3" fill="#fff" stroke="#888" stroke-width="1.2"/><text x="1576" y="349" font-size="11" text-anchor="middle" fill="#555">185</text></g>
<g><rect x="937" y="104" width="22" height="18" rx="3" fill="#fff" stroke="#888" stroke-width="1.2"/><text x="948" y="117" font-size="11" text-anchor="middle" fill="#555">260</text></g>
<g><rect x="922" y="137" width="22" height="18" rx="3" fill="#fff" stroke="#888" stroke-width="1.2"/><text x="933" y="150" font-size="11" text-anchor="middle" fill="#555">61</text></g>
<defs><linearGradient id="fg" gradientUnits="userSpaceOnUse" x1="0" y1="240" x2="-7" y2="450">
<stop offset="0" stop-color="#fff" stop-opacity="0"/>
<stop offset="0.45" stop-color="#fff" stop-opacity="0.3"/>
<stop offset="0.8" stop-color="#fff" stop-opacity="0.75"/>
<stop offset="1" stop-color="#fff" stop-opacity="1"/>
</linearGradient></defs>
<rect x="0" y="200" width="1920" height="300" fill="url(#fg)"/>
<defs><filter id="fb" x="-20%" y="-50%" width="140%" height="200%"><feGaussianBlur stdDeviation="22"/></filter></defs>
<path d="M-50,340 C200,342 450,350 540,365 C700,392 800,392 900,385 C1000,378 1100,376 1250,388 C1400,398 1550,410 1700,420 C1800,426 1900,430 2000,432 L2000,600 L-50,600 Z" fill="#fff" filter="url(#fb)"/>
<path d="M-50,388 L540,405 L900,430 L1250,432 L1700,465 L2000,475 L2000,600 L-50,600 Z" fill="#fff"/>
</svg></div>


<div id="tbox" class="abs" style="left:20px;top:183px;width:500px;height:202px;background:rgba(255,255,255,.9);filter:blur(6px)"></div>
<!-- header -->
<div id="hdr"></div>
<svg class="abs" style="left:0;top:0" width="1920" height="80" viewBox="0 0 1920 80">
  <!-- back -->
  <path d="M63,23 L45,37.5 L63,52" fill="none" stroke="#fff" stroke-width="6" stroke-linecap="round" stroke-linejoin="miter"/>
  <!-- hamburger -->
  <rect x="111" y="25" width="40" height="5" fill="#fff"/>
  <rect x="111" y="34.7" width="40" height="5" fill="#fff"/>
  <rect x="111" y="44.5" width="40" height="5" fill="#fff"/>
  <!-- bulb logo -->
  <g fill="none" stroke="#fff" stroke-width="2.4">
    <path d="M204,60 L202,53 C199,45 191.5,39 191.5,27 C191.5,13.5 202,3.8 215.2,3.8 C228.4,3.8 239,13.5 239,27 C239,39 231.5,45 228.5,53 L226.5,60"/>
    <path d="M205,60 L226,60 L225,73.5 L206,73.5 Z" stroke-width="2"/>
    <path d="M206,64 H225 M206,67.5 H225 M206,70.5 H225" stroke-width="1.6"/>
    <path d="M197.5,19 V37 M228.7,22.5 V41 M201,32.5 H212 M202,37.5 H212 M203,42.5 H212 M204,47.5 H212 M205,52.5 H212" stroke-width="1.8"/>
    <rect x="212.5" y="24.5" width="11" height="33" stroke-width="2"/>
  </g>
  <g fill="#fff">
    <rect x="215.3" y="28" width="6.6" height="4.6"/><rect x="215.3" y="35.4" width="6.6" height="4.6"/>
    <rect x="215.3" y="42.8" width="6.6" height="4.6"/><rect x="215.3" y="50.2" width="6.6" height="4.6"/>
  </g>
  <g stroke="#fff" stroke-width="2.6" stroke-linecap="round">
    <path d="M183.5,28.5 h2.5 M243.5,28 h2.5 M187.5,12.5 l2.5,2.5 M242.5,12.5 l-2.5,2.5 M200,3 l1,1.5 M230,3 l-1,1.5"/>
  </g>
  <!-- home -->
  <path d="M1102.5,38.6 L1120.7,22.5 L1138.9,38.6" fill="none" stroke="#fff" stroke-width="3.6" stroke-linecap="round" stroke-linejoin="miter"/>
  <path d="M1128.4,30 L1128.4,23.5 C1128.4,21.3 1134,21.3 1134,23.5 L1134,34.5 Z" fill="#fff"/>
  <path d="M1107.5,39.8 L1120.7,28 L1134,39.8 L1134,53.8 L1123.6,53.8 L1123.6,42.6 L1117.9,42.6 L1117.9,53.8 L1107.5,53.8 Z" fill="#fff"/>
  <!-- search box -->
  <rect x="1160.5" y="13.5" width="312.5" height="49.5" rx="2" fill="#fff"/>
  <circle cx="1448.5" cy="35.5" r="7.2" fill="none" stroke="#7a7a7a" stroke-width="2"/>
  <path d="M1453.5,40.5 L1461.5,48.5" stroke="#7a7a7a" stroke-width="3.2" stroke-linecap="round"/>
  <!-- help -->
  <circle cx="1310" cy="6.5" r="15.6" fill="#a3a3a3"/>
  <path d="M1308,8 C1308,4 1313,2 1313,-2" fill="none" stroke="#fff" stroke-width="2.2"/>
  <rect x="1307" y="12.5" width="3.5" height="2.5" fill="#fff"/>
  <!-- bell -->
  <g fill="#fff">
    <circle cx="1503.2" cy="21.6" r="2.2"/>
    <path d="M1503.2,22.4 C1496.5,22.4 1493.2,26.5 1493.2,32.5 L1493.2,37.5 C1493.2,43 1489.5,46.5 1487,50.8 L1519.4,50.8 C1517,46.5 1513.3,43 1513.3,37.5 L1513.3,32.5 C1513.3,26.5 1510,22.4 1503.2,22.4 Z"/>
    <path d="M1498,52 C1498,58.5 1508.4,58.5 1508.4,52 Z"/>
  </g>
  <!-- chart -->
  <g fill="#fff">
    <rect x="1559" y="18" width="3.5" height="39"/>
    <rect x="1559" y="53.5" width="39" height="3.5"/>
    <rect x="1566" y="26" width="8" height="24.5"/>
    <rect x="1577.5" y="20" width="8.5" height="30.5"/>
    <rect x="1588.5" y="34" width="8.5" height="16.5"/>
  </g>
  <!-- map -->
  <g fill="#fff">
    <path d="M1636.2,32 L1646.5,28.6 L1648,37.5 L1653.9,43.1 L1660,36.5 L1660.7,28.3 L1671.4,26.8 L1671.4,51.8 L1660.2,56.8 L1659.2,55.8 L1648,52.3 L1636.3,56.8 Z"/>
  </g>
  <path d="M1647.8,37 L1648.2,52.5 M1659.6,36.5 L1659.8,56.5" stroke="#3e5a8c" stroke-width="1.5" fill="none"/>
  <path d="M1653.9,17.6 C1648.5,17.6 1644.8,21.8 1644.8,26.6 C1644.8,32.4 1653.9,43.6 1653.9,43.6 C1653.9,43.6 1663,32.4 1663,26.6 C1663,21.8 1659.3,17.6 1653.9,17.6 Z" fill="#fff" stroke="#3e5a8c" stroke-width="1.4"/>
  <circle cx="1653.9" cy="26.8" r="3.3" fill="#3e5a8c"/>
  <!-- grid -->
  <g fill="#fff">
    <rect x="1713" y="20" width="10" height="10"/><rect x="1725.5" y="20" width="10" height="10"/><rect x="1738" y="20" width="10" height="10"/>
    <rect x="1713" y="32.5" width="10" height="10"/><rect x="1725.5" y="32.5" width="10" height="10"/><rect x="1738" y="32.5" width="10" height="10"/>
    <rect x="1713" y="45" width="10" height="10"/><rect x="1725.5" y="45" width="10" height="10"/><rect x="1738" y="45" width="10" height="10"/>
  </g>
  <!-- avatar -->
  <circle cx="1809.5" cy="35.5" r="26.5" fill="#fff"/>
  <path d="M1849,33 L1865,33 L1857,44 Z" fill="#fff"/>
  <rect x="1903.5" y="4" width="1.5" height="75" fill="#52699a"/>
</svg>
<div class="t" style="left:1793px;top:26px;font-size:20px;color:#2a88b6;letter-spacing:0.5px">LH</div>
<div class="t" style="left:260px;top:7px;font-size:22px;color:#fff;transform:scaleX(1.18);transform-origin:0 0">City of</div>
<div class="t" style="left:257.5px;top:30.4px;font-size:43.5px;color:#fff;transform:scaleX(1.232);transform-origin:0 0">INNOVATION</div>

<!-- title overlay -->
<div class="t" style="left:31.5px;top:211.5px;font-size:45px;color:#3a3a3a;transform:scaleX(0.975);transform-origin:0 0">Incident</div>
<div class="t" style="left:34px;top:284px;font-size:27.5px;color:#3d3d3d">Reported</div>
<div class="t" style="left:34px;top:321px;font-size:27.6px;color:#3d3d3d">INC-241126-00066</div>
<div class="abs" style="left:281px;top:322px;width:1px;height:28px;background:#d0d0d0"></div>
<div class="t" style="left:305px;top:324px;font-size:23.3px;color:#3d3d3d">Dilapidated Fence</div>

<!-- sidebar -->
<div class="abs" style="left:398px;top:390px;width:1px;height:672px;background:#e3e3e3"></div>
<svg class="abs" style="left:348px;top:417px" width="30" height="24" viewBox="0 0 30 24"><path d="M12,4 L5,12 L12,20 M23,4 L16,12 L23,20" fill="none" stroke="#666" stroke-width="2" stroke-linecap="round"/></svg>
<div class="abs" style="left:19px;top:459px;width:368px;height:68px;background:#46403d;border-radius:6px;box-shadow:0 1px 3px rgba(0,0,0,.25)"></div>
<div class="nav" style="left:37px;top:485px;color:#fff;font-size:22px">Overview</div>
<div class="nav" style="top:555px;font-size:22.6px">Property Information</div>
<div class="nav" style="top:623px;font-size:22.2px">Workflow</div>
<div class="nav" style="top:692px;font-size:22.2px">Details</div>
<div class="nav" style="top:762px;font-size:22.2px">Comments</div>
<div class="nav" style="top:831px;font-size:22.2px">Attachments</div>
<div class="nav" style="top:900px;font-size:22.2px">Communication</div>
<div class="nav" style="top:969px;font-size:22.2px">History</div>

<!-- content -->
<div class="t" style="left:430px;top:432px;font-size:36px;color:#3a3a3a">Overview</div>

<div class="t lbl" style="right:1269px;top:507px">Status</div>
<div class="abs" style="left:681px;top:501px;width:153px;height:30px;background:#249d9d;border-radius:7px"></div>
<div class="t" style="left:712px;top:508px;font-size:21.8px;color:#fff">Reported</div>

<div class="t lbl" style="right:1270px;top:573px;font-size:21.6px">Priority</div>
<div class="t val" style="left:681px;top:572.5px;font-size:22px;color:#3a3a3a;transform:scaleX(0.89);transform-origin:0 0">Yes</div>
<div class="t edit" style="left:730px;top:577px;font-size:23px">Edit</div>

<div class="t lbl" style="right:1264px;top:641px;font-size:22px">Issue Description</div>
<div class="t val" style="left:686px;top:640px;font-size:22px">Broken fence surrounding construction zone.</div>
<div class="t edit" style="left:698px;top:673px;font-size:23px">Edit</div>

<div class="abs" style="left:417px;top:711px;width:1325px;height:1px;background:#ebebeb"></div>

<div class="t lbl" style="right:1264px;top:735px;font-size:21.3px">Location</div>
<div class="t val" style="left:686px;top:736px">716 Lincoln Ave</div>

<div class="t lbl" style="right:1275px;top:785px;font-size:21.6px">District Type</div>
<div class="inp" style="left:676px;top:770px;width:395px;height:50px"></div>
<div class="t val" style="left:685px;top:787px">Code Enforcement Inspections</div>

<div class="t lbl" style="right:1275px;top:849px;font-size:21.6px">District</div>
<div class="inp" style="left:676px;top:834px;width:395px;height:50px"></div>

<div class="abs" style="left:417px;top:916px;width:1325px;height:1px;background:#ebebeb"></div>

<div class="inp" style="left:678px;top:960px;width:395px;height:50px"></div>
<div class="t val" style="left:686px;top:977px">Lisa Hill</div>
<div class="t lbl" style="right:1275px;top:1020px;font-size:21.6px">Code Technician</div>
<div class="t lbl" style="right:1275px;top:1034px;font-size:21.6px">Code Officer</div>
<div class="inp" style="left:678px;top:1022px;width:395px;height:60px"></div>

<div class="t lbl" style="left:1362px;top:785px">Reporte</div>
<div class="t lbl" style="left:1339px;top:849px">Review Du</div>

<!-- actions -->
<div class="abs" style="left:1434px;top:487px;width:148px;height:50px;background:#0780ce;border-radius:2px"></div>
<div class="t" style="left:1455px;top:503px;font-size:22px;color:#fff">Actions</div>
<div class="abs" style="left:1434px;top:537px;width:351px;height:331px;background:#fff;border:1px solid #d8d8d8;box-shadow:1px 2px 4px rgba(0,0,0,.18)"></div>
<div class="abs" style="left:1435px;top:538px;width:349px;height:54px;background:#ededf0"></div>
<div class="mi" style="top:555px">Schedule Inspection</div>
<div class="mi" style="top:609px">Mark as Duplicate</div>
<div class="mi" style="top:664px">Reassign Code Technician</div>
<div class="mi" style="top:719px">Release</div>
<div class="mi" style="top:775px">Reroute Incident</div>
<div class="mi" style="top:829px">Close</div>


<!-- input search icons -->
<svg class="abs" style="left:0;top:0" width="1920" height="1080" viewBox="0 0 1920 1080">
  <defs>
   <g id="mag"><circle cx="0" cy="0" r="7" fill="none" stroke="#2f2f2f" stroke-width="2.2"/><path d="M5,5 L11.5,11.5" stroke="#2f2f2f" stroke-width="3.6" stroke-linecap="round"/></g>
  </defs>
  <use href="#mag" x="1047" y="796"/>
  <use href="#mag" x="1047" y="859"/>
  <use href="#mag" x="1049" y="984"/>
  <use href="#mag" x="1049" y="1046"/>
  <!-- actions triangle -->
  <path d="M1541,507 L1556,507 L1548.5,517 Z" fill="#fff"/>
  <!-- person reassign icon -->
  <g>
    <path d="M608.8,979.5 A10.8,10.8 0 1 1 629.6,984" fill="none" stroke="#1a78b8" stroke-width="2"/>
    <path d="M604.8,977.2 L612.6,977.2 L608.6,983.6 Z" fill="#1a78b8"/>
    <ellipse cx="619.4" cy="980.4" rx="3.9" ry="4.6" fill="#1a78b8"/>
    <path d="M612,990 C612,986.5 615.5,985.3 619.5,985.3 C623.5,985.3 627,986.5 627,990 C627,992 623,993 619.5,993 C616,993 612,992 612,990 Z" fill="#1a78b8"/>
  </g>
</svg>
<!-- bottom white clip -->
<div class="abs" style="left:400px;top:1062px;width:1520px;height:18px;background:#fff"></div>

<!-- map zoom controls -->
<div class="abs" style="left:1813px;top:104px;width:51px;height:150px;background:#fff;box-shadow:0 0 2px rgba(0,0,0,.25)"></div>
<div class="abs" style="left:1813px;top:153px;width:51px;height:1px;background:#e4e4e4"></div>
<div class="abs" style="left:1813px;top:203px;width:51px;height:1px;background:#e4e4e4"></div>
<svg class="abs" style="left:1813px;top:104px" width="51" height="150" viewBox="0 0 51 150">
  <path d="M25.5,13 V37 M13.5,25 H37.5" stroke="#555" stroke-width="1.8"/>
  <path d="M13.5,73 H37.5" stroke="#555" stroke-width="1.8"/>
  <circle cx="25" cy="124" r="11" fill="none" stroke="#555" stroke-width="1.6"/>
  <circle cx="25" cy="117.5" r="1.3" fill="#555"/>
  <path d="M25,121 V131 M22.5,131 H27.5" stroke="#555" stroke-width="1.6"/>
</svg>

<!-- floating dark pill -->
<div class="abs" style="left:1813px;top:420px;width:57px;height:113px;background:#2f2a27;border-radius:28.5px;box-shadow:0 2px 5px rgba(0,0,0,.35)"></div>
<svg class="abs" style="left:1813px;top:420px" width="57" height="113" viewBox="0 0 57 113">
  <circle cx="28.5" cy="28" r="18" fill="none" stroke="#e8e8e8" stroke-width="2.4"/>
  <text x="28.5" y="37" font-family="Liberation Serif" font-style="italic" font-weight="bold" font-size="29" fill="#f0f0f0" text-anchor="middle">i</text>
  <g fill="#8c8886">
    <circle cx="18" cy="66" r="3.6"/><circle cx="29" cy="66" r="3.6"/><circle cx="40" cy="66" r="3.6"/>
    <circle cx="18" cy="77" r="3.6"/><circle cx="29" cy="77" r="3.6"/><circle cx="40" cy="77" r="3.6"/>
    <circle cx="18" cy="88" r="3.6"/><circle cx="29" cy="88" r="3.6"/><circle cx="40" cy="88" r="3.6"/>
  </g>
</svg>
<div class="abs" style="left:1906px;top:79px;width:1px;height:380px;background:rgba(0,0,0,.12)"></div>
<div class="abs" style="left:1905px;top:459px;width:7px;height:621px;background:#fbfbfb"></div>
</body></html>
